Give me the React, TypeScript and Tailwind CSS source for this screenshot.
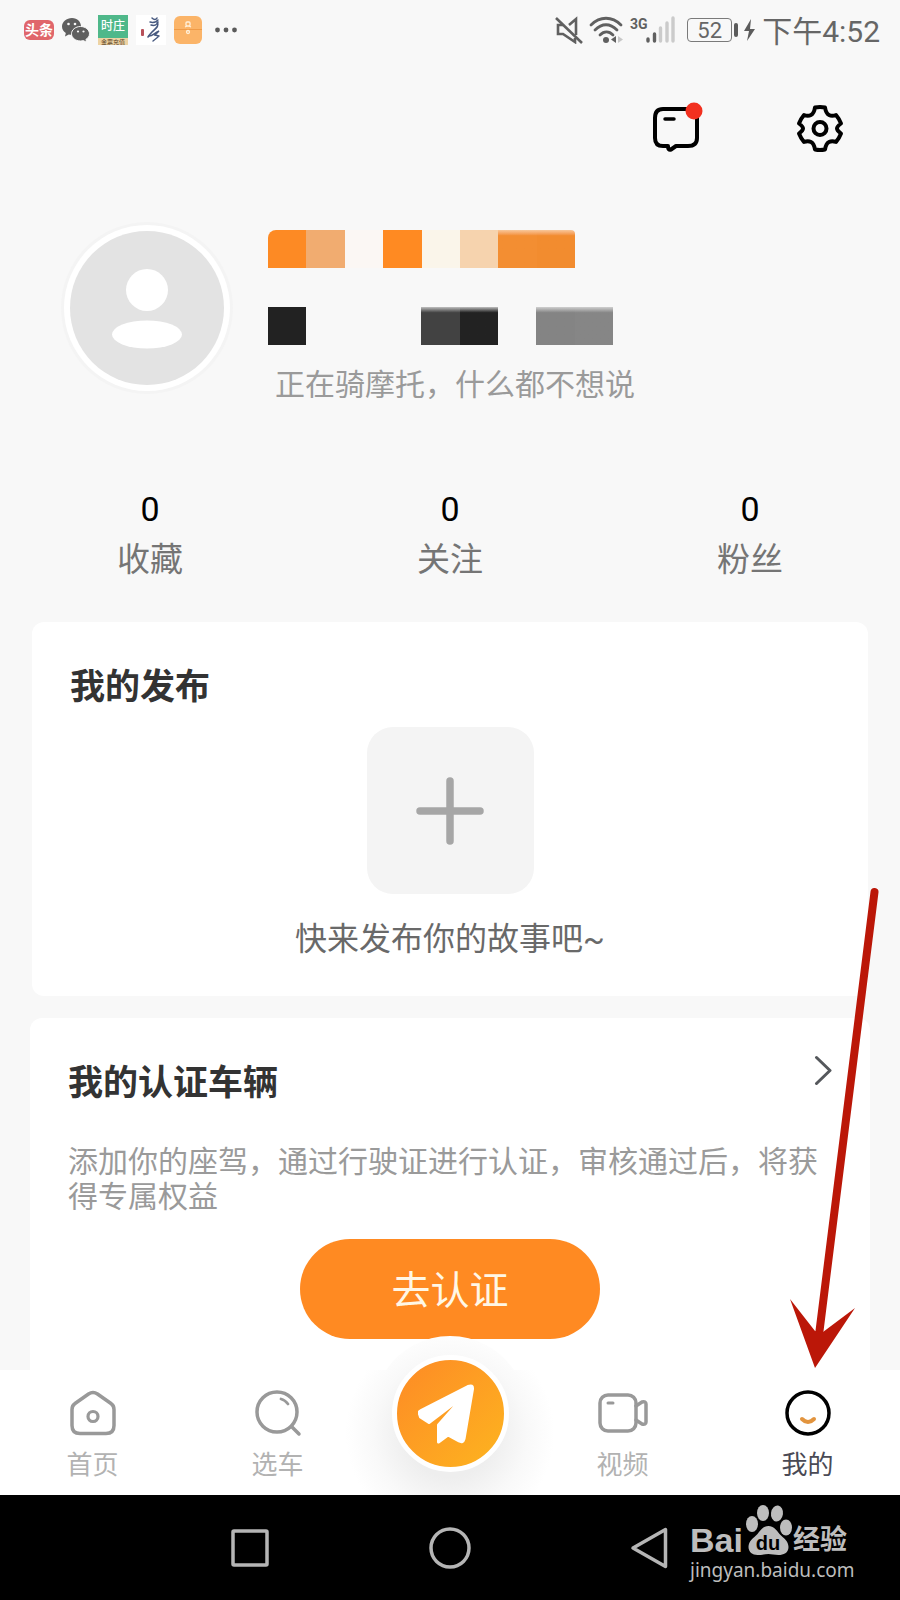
import type { ReactNode } from 'react';

const stats = [
  { label: '收藏', value: 0 },
  { label: '关注', value: 0 },
  { label: '粉丝', value: 0 },
];

const nameBlocks = [
  'bg-[#fd8a24]',
  'bg-[#f1ac70]',
  'bg-[#fbf7f4]',
  'bg-[#ff8a22]',
  'bg-[#faf5ea]',
  'bg-[#f6d3ae]',
  'bg-linear-to-b from-[#f8c79a] to-[#f38e32] to-15%',
  'bg-linear-to-b from-[#f8c79a] to-[#f28c2f] to-15%',
];

const idBlocks = [
  'bg-[#222222]',
  '',
  '',
  '',
  'bg-linear-to-b from-[#c0c0c0] to-[#424242] to-15%',
  'bg-linear-to-b from-[#c0c0c0] to-[#222222] to-15%',
  '',
  'bg-linear-to-b from-[#d0d0d0] to-[#848484] to-15%',
  'bg-linear-to-b from-[#d0d0d0] to-[#868686] to-15%',
];

function StatusBar() {
  return (
    <div className="flex h-15 items-center justify-between pl-6 pr-5 text-[#666666]">
      <div className="flex items-center gap-2">
        <span className="flex h-5 w-[30px] items-center justify-center rounded-md bg-[#e0666b] text-sm font-bold text-white">头条</span>
        <svg className="h-6 w-7" viewBox="0 0 28 24" fill="#5f5f5f" aria-hidden="true">
          <path d="M10 0C4.500 0 0 3.800 0 8.500c0 2.700 1.500 5 3.800 6.600L3 18.500l3.800-2.100c1 .3 2.100.5 3.200.5C15.500 17 19 13.200 19 8.500S15.500 0 10 0z" />
          <path stroke="#f8f8f8" d="M18.500 8.500c-5 0-9 3.300-9 7.300s4 7.200 9 7.200c1 0 2-.1 2.900-.4l3.300 1.700-.8-2.900c2.200-1.300 3.600-3.300 3.600-5.600 0-4-4-7.300-9-7.300z" />
          <g fill="#f8f8f8">
            <circle cx="6.500" cy="6" r="1.300" />
            <circle cx="13" cy="6" r="1.300" />
            <circle cx="16" cy="13.500" r="1.100" />
            <circle cx="21.500" cy="13.500" r="1.100" />
          </g>
        </svg>
        <span className="flex h-[30px] w-[30px] flex-col overflow-hidden bg-[#4fb88a] text-center text-white">
          <span className="h-[23px] text-[12px] leading-[23px] font-medium">时庄</span>
          <span className="h-[7px] bg-[#edd3a4] text-[6px] leading-[7px] text-[#5b4023]">金票充值</span>
        </span>
        <svg className="h-[30px] w-[30px] bg-white" viewBox="0 0 30 30" fill="none" aria-hidden="true">
          <rect x="5" y="14" width="3" height="7" rx="1" fill="#b8515a" />
          <g stroke="#47597f" strokeLinecap="round">
            <path strokeWidth="1.500" d="M16 3c2 2 4 2 5 0M14 7c3 1 6 0 8-2M15 10c3 1 6 0 7-3" />
            <path strokeWidth="1.600" d="M21 7c3 4-2 7-5 10q-2 2-4 5" />
            <path strokeWidth="1.400" d="M13 21c4 0 5-3 10-5l-4 4 4 1M17 26l5-4" />
          </g>
        </svg>
        <svg className="h-7 w-7" viewBox="0 0 28 28" fill="none" aria-hidden="true">
          <rect width="28" height="28" rx="6" fill="#fbb468" />
          <path stroke="#f09b47" d="M0 13.500h28" />
          <g stroke="#fff0da" strokeWidth="1.300">
            <rect x="12" y="6" width="4" height="4" rx="1" />
            <path d="M11 11l2-1M17 11l-2-1" />
            <circle cx="14" cy="16" r="1.500" />
          </g>
        </svg>
        <svg className="ml-1 h-1.5 w-6" viewBox="0 0 24 6" fill="#5a5a5a" aria-hidden="true">
          <circle cx="3.500" cy="3" r="2.400" />
          <circle cx="12" cy="3" r="2.400" />
          <circle cx="20.500" cy="3" r="2.400" />
        </svg>
      </div>

      <div className="flex items-center">
        <svg className="h-7 w-[120px]" viewBox="0 0 120 28" fill="none" aria-hidden="true">
          <g stroke="#606060" strokeWidth="2.600">
            <path d="M21 19V3l-7 6M8 9H3v9h5l12 8v-4" />
            <path d="M1 2l26 25" />
          </g>
          <g stroke="#606060" strokeWidth="2.800" strokeLinecap="round">
            <path d="M36 9c9-9 21-9 30 0" />
            <path d="M40 14c7-7 15-7 22 0" />
            <path d="M45 19c4-4 9-4 13 0" />
          </g>
          <circle cx="51" cy="24" r="3" fill="#606060" />
          <path fill="#606060" d="M61 20v7l-5-3.500z" />
          <path fill="#c8c8c8" d="M63 20v7l5-3.500z" />
          <g strokeWidth="3.400" strokeLinecap="round">
            <path stroke="#606060" d="M93 25v-2M99.500 25v-7" />
            <path stroke="#cbcbcb" d="M105.500 25V12M112 25V7M118 25V2" />
          </g>
          <text x="75" y="13" fontSize="14" fontWeight="700" fontFamily="Roboto, sans-serif" fill="#606060">3G</text>
        </svg>
        <div className="ml-3 flex h-6 w-[45px] items-center justify-center rounded border border-[#7a7a7a] pt-0.5 text-[22px] leading-6">52</div>
        <svg className="ml-0.5 h-6 w-6" viewBox="0 0 24 24" fill="#5c5c5c" aria-hidden="true">
          <rect x="0" y="5" width="4" height="14" rx="2" />
          <path d="M17 1L10 13h5l-2 10 8-12h-5z" />
        </svg>
        <span className="ml-1 pt-1 text-[30px] leading-8">下午4:52</span>
      </div>
    </div>
  );
}

function TabItem({ label, active, children }: { label: string; active?: boolean; children: ReactNode }) {
  return (
    <a href="#" className="flex flex-1 flex-col items-center gap-[11px] pt-[18px]">
      <svg className="h-[50px] w-[50px]" viewBox="0 0 50 50" fill="none" stroke="#999999" strokeWidth="3.500" strokeLinecap="round" strokeLinejoin="round" aria-hidden="true">
        {children}
      </svg>
      <span className={`text-[26px] leading-8 ${active ? 'text-[#4a4a55]' : 'text-[#b2b2b2]'}`}>{label}</span>
    </a>
  );
}

function TabBar() {
  return (
    <nav className="relative flex h-[125px] bg-white">
      {/* raised bump and soft shadow behind the publish button */}
      <svg className="absolute bottom-0 left-1/2 h-40 w-[260px] -translate-x-1/2" viewBox="0 0 260 160" aria-hidden="true">
        <defs>
          <radialGradient id="publishShadow" gradientUnits="userSpaceOnUse" cx="130" cy="98" r="110">
            <stop offset="0.4" stopColor="#eeeeee" />
            <stop offset="0.7" stopColor="#f9f9f9" />
            <stop offset="0.95" stopColor="#ffffff" />
          </radialGradient>
          <clipPath id="publishBump">
            <circle cx="130" cy="78" r="77" />
            <rect y="35" width="260" height="125" />
          </clipPath>
        </defs>
        <rect width="260" height="160" fill="url(#publishShadow)" clipPath="url(#publishBump)" />
      </svg>
      <TabItem label="首页">
        <path d="M20.500 6q4.500-3 9 0l13.500 9.500q3 2 3 6v16q0 8-8 8H12q-8 0-8-8v-16q0-4 3-6z" />
        <circle cx="25" cy="28.500" r="5" strokeWidth="3.200" />
      </TabItem>
      <TabItem label="选车">
        <circle cx="24" cy="24" r="20" />
        <path d="M39 39l7 7" />
        <path strokeWidth="2.800" d="M28 11q4 1 7 5" />
      </TabItem>
      <div className="relative flex w-40 justify-center">
        <button type="button" aria-label="发布" className="-mt-[15px] flex h-[117px] w-[117px] items-center justify-center rounded-full border-[5px] border-white bg-linear-to-br from-[#fd8a25] to-[#fdb41f]">
          <svg className="h-16 w-16 shrink-0" viewBox="0 0 64 64" fill="white" stroke="white" strokeWidth="3" strokeLinejoin="round" aria-hidden="true">
            <path d="M1.500 32Q0 30 3 28.500L50 4.500q5-2 4.500 2.500L46 57q-1 4-5 2l-11-6-9.500 7V43L46.500 13.500 11 40.500 2.500 35z" />
          </svg>
        </button>
      </div>
      <TabItem label="视频">
        <rect x="2" y="7" width="36" height="36" rx="8" />
        <path d="M38 18l6-4q4-1 4 2v18q0 3-4 2l-6-4" />
        <path strokeWidth="3" d="M10 15h5" />
      </TabItem>
      <TabItem label="我的" active>
        <circle cx="25" cy="25" r="21" stroke="black" />
        <path stroke="#e2943e" strokeWidth="4" d="M19 31q6 6 12 0" />
      </TabItem>
    </nav>
  );
}

function Watermark() {
  return (
    <div className="absolute right-12 top-2 flex w-[162px] flex-col text-[#bdbdbd]">
      <div className="flex h-[53px] items-end">
        <span className="w-[55px] font-['Liberation_Sans'] text-[34px] leading-8 font-bold">Bai</span>
        <svg className="h-[52px] w-[48px]" viewBox="0 0 48 52" fill="currentColor" aria-hidden="true">
          <ellipse cx="7" cy="20" rx="6" ry="8" />
          <ellipse cx="18" cy="9" rx="6" ry="8" />
          <ellipse cx="32" cy="9.500" rx="6" ry="8" transform="rotate(8 32 9.500)" />
          <ellipse cx="41" cy="23.500" rx="6" ry="8" />
          <path d="M23.500 22c5 0 8 4 11 8 4 4 9 7 9 13 0 6-5 8-10 8-4 0-7-1-10-1s-7 1-11 1c-5 0-9-3-9-8 0-6 5-9 9-13 3-4 6-8 11-8z" />
          <text x="23" y="46" textAnchor="middle" fontSize="20" fontWeight="700" fontFamily="Liberation Sans, sans-serif" fill="black">du</text>
        </svg>
        <span className="text-[27px] leading-8 font-bold">经验</span>
      </div>
      <span className="mt-0.5 font-['Noto_Sans'] text-[19px] leading-6">jingyan.baidu.com</span>
    </div>
  );
}

function SystemNav() {
  return (
    <div className="relative flex h-[105px] items-center justify-center gap-[156px] bg-black">
      <button type="button" aria-label="Recents">
        <svg className="block h-11 w-11" viewBox="0 0 44 44" fill="none" stroke="#b5b5b5" strokeWidth="3.500" strokeLinejoin="round" aria-hidden="true">
          <rect x="5" y="5" width="34" height="34" rx="1" />
        </svg>
      </button>
      <button type="button" aria-label="Home">
        <svg className="block h-11 w-11" viewBox="0 0 44 44" fill="none" stroke="#b5b5b5" strokeWidth="3.500" aria-hidden="true">
          <circle cx="22" cy="22" r="19" />
        </svg>
      </button>
      <button type="button" aria-label="Back">
        <svg className="block h-11 w-11" viewBox="0 0 44 44" fill="none" stroke="#b5b5b5" strokeWidth="3.500" strokeLinejoin="round" aria-hidden="true">
          <path d="M37.500 3.500v37L5 22z" />
        </svg>
      </button>
      <Watermark />
    </div>
  );
}

export default function App() {
  return (
    <div className="relative flex min-h-screen flex-col overflow-hidden bg-[#f8f8f8] font-['Roboto','Noto_Sans_CJK_SC',sans-serif]">
      <StatusBar />

      <header className="flex justify-end gap-[86px] pt-10 pr-[52px]">
        <button type="button" aria-label="消息">
          <svg className="block h-14 w-14" viewBox="0 0 56 56" fill="none" stroke="black" strokeWidth="4" strokeLinecap="round" strokeLinejoin="round" aria-hidden="true">
            <path d="M13 9h25q9 0 9 9v20q0 8-9 8H26l-5 3.500q-3 1-3-3.500h-5q-8 0-8-8V18q0-9 8-9z" />
            <path strokeWidth="3.500" d="M15 19h9" />
            <circle cx="44" cy="11" r="8.500" fill="#f2301f" stroke="none" />
          </svg>
        </button>
        <button type="button" aria-label="设置">
          <svg className="block h-14 w-14" viewBox="0 0 56 56" fill="none" stroke="black" strokeWidth="4" strokeLinejoin="round" aria-hidden="true">
            <path d="M23 7.500q5-1 10 0q1 6 4 7.500q3 1.500 7 0q3 3.500 5 8.500q-4 3-4 5q0 2 4 5q-2 5-5 8.500q-4-1.500-7 0q-3 1.500-4 7.500q-5 1-10 0q-1-6-4-7.500q-3-1.500-7 0q-3-3.500-5-8.500q4-3 4-5q0-2-4-5q2-5 5-8.500q4 1.500 7 0q3-1.500 4-7.500z" />
            <circle cx="28" cy="28.500" r="6.500" strokeWidth="4" />
          </svg>
        </button>
      </header>

      <main className="flex flex-1 flex-col">
        <section className="flex items-start pt-[66px] pl-[61px]">
          <svg className="h-[172px] w-[172px] shrink-0" viewBox="0 0 172 172" aria-hidden="true">
            <circle cx="86" cy="86" r="86" fill="#f4f4f4" />
            <circle cx="86" cy="86" r="83" fill="white" />
            <circle cx="86" cy="86" r="77" fill="#e3e3e3" />
            <circle cx="86" cy="68" r="21" fill="white" />
            <ellipse cx="86" cy="112.500" rx="35" ry="14" fill="white" />
          </svg>
          <div className="pl-[35px] pt-2">
            <div className="flex h-[38px] w-[307px] overflow-hidden rounded-tl-lg rounded-tr-sm">
              {nameBlocks.map((color, i) => (
                <span key={i} className={`flex-1 ${color}`} />
              ))}
            </div>
            <div className="mt-[39px] flex h-[38px] w-[345px]">
              {idBlocks.map((color, i) => (
                <span key={i} className={`flex-1 ${color}`} />
              ))}
            </div>
            <p className="mt-5 pl-[7px] text-[30px] leading-10 text-[#9a9a9a]">正在骑摩托，什么都不想说</p>
          </div>
        </section>

        <section className="mt-[84px] grid grid-cols-3 text-center">
          {stats.map((stat) => (
            <div key={stat.label} className="flex flex-col">
              <span className="text-[34px] leading-10 text-black">{stat.value}</span>
              <span className="mt-[7px] text-[33px] leading-[48px] text-[#757575]">{stat.label}</span>
            </div>
          ))}
        </section>

        <section className="mx-8 mt-[38px] rounded-xl bg-white px-[38px] pt-[43px] pb-[34px]">
          <h2 className="text-[35px] leading-[46px] font-bold text-[#333333]">我的发布</h2>
          <div className="mt-4 flex flex-col items-center">
            <button type="button" aria-label="发布" className="flex h-[167px] w-[167px] items-center justify-center rounded-[26px] bg-[#f4f4f4]">
              <svg className="h-[68px] w-[68px]" viewBox="0 0 68 68" stroke="#a6a6a6" strokeWidth="7.500" strokeLinecap="round" aria-hidden="true">
                <path d="M34 4v60M4 34h60" />
              </svg>
            </button>
            <p className="mt-[22px] text-[32px] leading-[46px] text-[#696969]">快来发布你的故事吧~</p>
          </div>
        </section>

        <section className="mx-[30px] mt-[22px] flex-1 rounded-t-xl bg-white px-[38px] pt-[43px]">
          <div className="flex items-start justify-between">
            <h2 className="text-[35px] leading-[46px] font-bold text-[#333333]">我的认证车辆</h2>
            <a href="#" aria-label="查看认证车辆" className="-mt-2">
              <svg className="block h-9 w-5" viewBox="0 0 20 36" fill="none" stroke="#55585c" strokeWidth="3" strokeLinecap="round" strokeLinejoin="round" aria-hidden="true">
                <path d="M4.500 4.500l13.500 13-13.500 13" />
              </svg>
            </a>
          </div>
          <p className="mt-[37px] text-[30px] leading-[35px] text-[#9a9a9a]">添加你的座驾，通过行驶证进行认证，审核通过后，将获得专属权益</p>
          <button type="button" className="mx-auto mt-[25px] block h-[100px] w-[300px] rounded-full bg-[#ff8a22] pt-1 text-[39px] text-[#fff7e6]">
            去认证
          </button>
        </section>
      </main>

      <TabBar />
      <SystemNav />

      <svg className="pointer-events-none absolute right-0 bottom-[225px] h-[490px] w-[120px]" viewBox="0 0 120 490" aria-hidden="true">
        <path d="M94.500 7L39 450" stroke="#bb1708" strokeWidth="8" strokeLinecap="round" />
        <path d="M10 414l25 32 8 1 32-24-40 60z" fill="#bb1708" />
      </svg>
    </div>
  );
}
